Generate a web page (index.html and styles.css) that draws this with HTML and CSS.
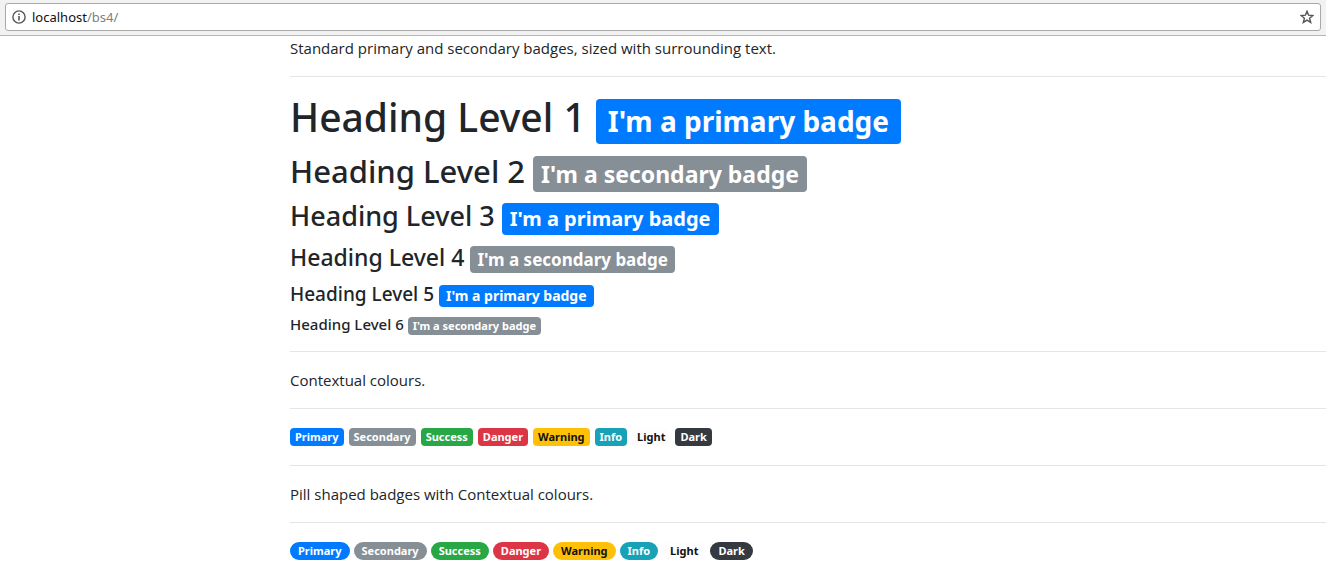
FILE: index.html
```
<!DOCTYPE html>
<html lang="en">
<head>
  <meta charset="UTF-8" />
  <meta name="viewport" content="width=device-width, initial-scale=1.0" />
  <title>Badges</title>
  <link rel="stylesheet" href="styles.css">
</head>
<body>

  <header class="toolbar">
    <div class="address-bar">
      <svg class="info-icon" viewBox="0 0 14 14" aria-hidden="true">
        <circle cx="7" cy="7" r="6.1" fill="none" stroke="#555" stroke-width="1.4" />
        <path d="M6.2 3.4h1.6V5H6.2zM6.2 6h1.6v4.6H6.2z" fill="#555" />
      </svg>
      <div class="address"><span class="host">localhost</span>/bs4/</div>
      <button class="bookmark" type="button" aria-label="Bookmark this page">
        <svg viewBox="0 0 14 14" aria-hidden="true">
          <path d="M7 1.3l1.6 3.9 4.3.3-3.3 2.7 1.1 4.2L7 10.1l-3.7 2.3 1.1-4.2L1.1 5.5l4.3-.3z" fill="none" stroke="#555" stroke-width="1.4" />
        </svg>
      </button>
    </div>
  </header>

  <main class="content">
    <p>Standard primary and secondary badges, sized with surrounding text.</p>
    <hr>
    <h1>Heading Level 1 <span class="badge badge-primary">I'm a primary badge</span></h1>
    <h2>Heading Level 2 <span class="badge badge-secondary">I'm a secondary badge</span></h2>
    <h3>Heading Level 3 <span class="badge badge-primary">I'm a primary badge</span></h3>
    <h4>Heading Level 4 <span class="badge badge-secondary">I'm a secondary badge</span></h4>
    <h5>Heading Level 5 <span class="badge badge-primary">I'm a primary badge</span></h5>
    <h6>Heading Level 6 <span class="badge badge-secondary">I'm a secondary badge</span></h6>
    <hr>
    <p>Contextual colours.</p>
    <hr>
    <div class="badges">
      <span class="badge badge-primary">Primary</span>
      <span class="badge badge-secondary">Secondary</span>
      <span class="badge badge-success">Success</span>
      <span class="badge badge-danger">Danger</span>
      <span class="badge badge-warning">Warning</span>
      <span class="badge badge-info">Info</span>
      <span class="badge badge-light">Light</span>
      <span class="badge badge-dark">Dark</span>
    </div>
    <hr>
    <p>Pill shaped badges with Contextual colours.</p>
    <hr>
    <div class="badges badges-pill">
      <span class="badge badge-pill badge-primary">Primary</span>
      <span class="badge badge-pill badge-secondary">Secondary</span>
      <span class="badge badge-pill badge-success">Success</span>
      <span class="badge badge-pill badge-danger">Danger</span>
      <span class="badge badge-pill badge-warning">Warning</span>
      <span class="badge badge-pill badge-info">Info</span>
      <span class="badge badge-pill badge-light">Light</span>
      <span class="badge badge-pill badge-dark">Dark</span>
    </div>
  </main>

</body>
</html>
```

FILE: styles.css
```
* { box-sizing: border-box; }

body {
  margin: 0;
  font-family: "Segoe UI", "Open Sans", "Noto Sans", sans-serif;
  font-size: 15px;
  line-height: 24px;
  color: #212529;
  background: #fff;
}

/* browser bar */
.toolbar {
  padding: 3px 5px 4px;
  background: #f2f2f2;
  border-bottom: 1px solid #b6b4b6;
}

.address-bar {
  display: flex;
  align-items: center;
  height: 28px;
  padding: 0 6px;
  background: #fff;
  border: 1px solid #a9a9a9;
  border-radius: 3px;
}

.info-icon { width: 14px; height: 14px; margin-right: 6px; }

.address {
  flex: 1;
  font-family: Tahoma, "Noto Sans", sans-serif;
  font-size: 13px;
  color: #808080;
}

.host { color: #111; }

.bookmark {
  display: flex;
  padding: 0;
  background: none;
  border: 0;
  cursor: pointer;
}

.bookmark svg { width: 14px; height: 14px; }

/* page */
.content { padding-left: 290px; }

p { margin: 0; }

hr {
  margin: 16px 0;
  border: 0;
  border-top: 1px solid #e5e5e5;
}

h1, h2, h3, h4, h5, h6 {
  margin: 0 0 8px;
  font-family: "Segoe UI", "Noto Sans", sans-serif;
  font-weight: 500;
}

h1 { font-size: 39px; line-height: 48px; }
h2 { font-size: 31px; line-height: 38px; }
h3 { font-size: 27px; line-height: 32px; }
h4 { font-size: 23px; line-height: 28px; }
h5 { font-size: 19px; line-height: 26px; }
h6 { font-size: 15px; line-height: 18px; }

.badges {
  display: flex;
  flex-wrap: wrap;
  align-items: center;
  gap: 5px;
  min-height: 24px;
}

.badges-pill { gap: 4px; }

.badge {
  display: inline-block;
  padding: 3px 5px;
  font-family: "Segoe UI", "Noto Sans", sans-serif;
  font-size: 11px;
  font-weight: 700;
  line-height: 12px;
  color: #fff;
  text-align: center;
  white-space: nowrap;
  vertical-align: baseline;
  border-radius: 4px;
}

h1 .badge { padding: 8px 12px; font-size: 28px; line-height: 29px; }
h2 .badge { padding: 6px 8px; font-size: 23px; line-height: 24px; }
h3 .badge { padding: 5px 8px; font-size: 20px; line-height: 22px; }
h4 .badge { padding: 4px 7px; font-size: 17px; line-height: 19px; }
h5 .badge { padding: 3px 7px; font-size: 14px; line-height: 16px; }

.badge-pill {
  padding: 3px 8px;
  border-radius: 10px;
}

.badge-primary { background: #007bff; }
.badge-secondary { background: #868e96; }
.badge-success { background: #28a745; }
.badge-danger { background: #dc3545; }
.badge-warning { color: #111; background: #ffc107; }
.badge-info { background: #17a2b8; }
.badge-light { color: #111; background: #fdfdfe; }
.badge-dark { background: #343a40; }
```
